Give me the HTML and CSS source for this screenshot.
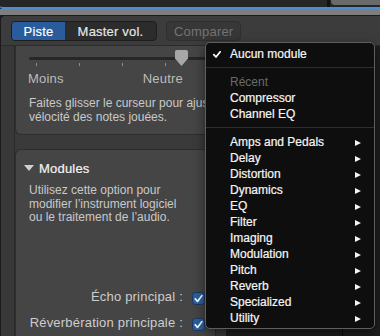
FILE: index.html
```html
<!DOCTYPE html>
<html lang="fr">
<head>
<meta charset="utf-8">
<title>Piste</title>
<link rel="stylesheet" href="styles.css">
</head>
<body>
<div class="titlebar">
  <div class="field"></div>
  <div class="divider"></div>
  <div class="knob"></div>
</div>
<div class="band"></div>
<div class="window">
  <div class="toolbar">
    <div class="segmented">
      <div class="seg active">Piste</div>
      <div class="seg master">Master vol.</div>
    </div>
    <div class="button">Comparer</div>
  </div>
  <div class="body">
    <div class="gutter"></div>
    <div class="inspector">
      <div class="panel first">
        <div class="slider">
          <div class="track"></div>
          <div class="ticks"><i></i><i></i><i></i><i></i><i></i></div>
          <svg class="thumb" width="13" height="16" viewBox="0 0 13 16"><path d="M0 2Q0 0 2 0H11Q13 0 13 2V8.5L6.5 16L0 8.5Z" fill="#a7a7a7"/></svg>
        </div>
        <div class="scale"><span>Moins</span><span>Neutre</span></div>
        <div class="desc">Faites glisser le curseur pour ajuster la<br>vélocité des notes jouées.</div>
      </div>
      <div class="panel second">
        <div class="section-head"><span class="disclosure"></span><span>Modules</span></div>
        <div class="desc desc2">Utilisez cette option pour<br>modifier l’instrument logiciel<br>ou le traitement de l’audio.</div>
        <div class="options">
          <span class="opt-label">Écho principal :</span>
          <svg class="check" width="13" height="13" viewBox="0 0 13 13"><rect x="0.5" y="0.5" width="12" height="12" rx="3" fill="#2c5f9f" stroke="#1a375e"/><path d="M3.2 6.8L5.5 9.4L10 3.6" fill="none" stroke="#fff" stroke-width="1.6" stroke-linecap="round" stroke-linejoin="round"/></svg>
          <span class="opt-label">Réverbération principale :</span>
          <svg class="check" width="13" height="13" viewBox="0 0 13 13"><rect x="0.5" y="0.5" width="12" height="12" rx="3" fill="#2c5f9f" stroke="#1a375e"/><path d="M3.2 6.8L5.5 9.4L10 3.6" fill="none" stroke="#fff" stroke-width="1.6" stroke-linecap="round" stroke-linejoin="round"/></svg>
        </div>
      </div>
    </div>
    <div class="darkpane"><div class="vline"></div></div>
  </div>
</div>

<div class="menu">
  <div class="item"><span class="mark"><svg width="8" height="7" viewBox="0 0 8 7"><path d="M0.8 3.6L3 6L7.2 0.8" fill="none" stroke="#fff" stroke-width="1.7" stroke-linecap="round" stroke-linejoin="round"/></svg></span>Aucun module</div>
  <div class="sep"></div>
  <div class="item disabled"><span class="mark"></span>Récent</div>
  <div class="item"><span class="mark"></span>Compressor</div>
  <div class="item"><span class="mark"></span>Channel EQ</div>
  <div class="sep"></div>
  <div class="item"><span class="mark"></span>Amps and Pedals<span class="arrow"></span></div>
  <div class="item"><span class="mark"></span>Delay<span class="arrow"></span></div>
  <div class="item"><span class="mark"></span>Distortion<span class="arrow"></span></div>
  <div class="item"><span class="mark"></span>Dynamics<span class="arrow"></span></div>
  <div class="item"><span class="mark"></span>EQ<span class="arrow"></span></div>
  <div class="item"><span class="mark"></span>Filter<span class="arrow"></span></div>
  <div class="item"><span class="mark"></span>Imaging<span class="arrow"></span></div>
  <div class="item"><span class="mark"></span>Modulation<span class="arrow"></span></div>
  <div class="item"><span class="mark"></span>Pitch<span class="arrow"></span></div>
  <div class="item"><span class="mark"></span>Reverb<span class="arrow"></span></div>
  <div class="item"><span class="mark"></span>Specialized<span class="arrow"></span></div>
  <div class="item"><span class="mark"></span>Utility<span class="arrow"></span></div>
</div>
</body>
</html>
```

FILE: styles.css
```css
* { box-sizing: border-box; }

body {
  margin: 0;
  width: 380px;
  height: 336px;
  overflow: hidden;
  position: relative;
  background: #1e1e1e;
  font-family: "Liberation Sans", Arial, sans-serif;
}

.titlebar {
  display: flex;
  height: 9px;
  background: #262626;
  border-bottom: 2px solid #4a8ed8;
  border-bottom-left-radius: 3px;
}
.titlebar .field { flex: 1; }
.titlebar .divider { width: 3px; background: #121212; }
.titlebar .knob {
  width: 49px;
  height: 5px;
  margin-left: 1px;
  background: #6a6a6a;
  border-bottom-left-radius: 4px;
}

.band { height: 6px; background: #7e7e7e; }

.window {
  height: 321px;
  border-top: 1px solid #1b1b1b;
  border-left: 1px solid #1b1b1b;
  border-top-left-radius: 5px;
  background: #3c3c3c;
  display: flex;
  flex-direction: column;
  overflow: hidden;
}

.toolbar {
  height: 30px;
  flex: none;
  border-bottom: 1px solid #2b2b2b;
  display: flex;
  align-items: flex-start;
  gap: 9px;
  padding: 5px 0 0 10px;
}

.segmented {
  display: flex;
  height: 20px;
  border: 1px solid #1e1e1e;
  border-radius: 4px;
  background: #2c2c2c;
  overflow: hidden;
}
.seg {
  display: flex;
  align-items: center;
  justify-content: center;
  font-size: 13px;
  letter-spacing: 0.2px;
  color: #e8e8e8;
  -webkit-text-stroke: 0.15px currentColor;
}
.seg.active { width: 53px; background: #2a5c9d; color: #fff; }
.seg.master { width: 91px; }

.button {
  height: 20px;
  display: flex;
  align-items: center;
  padding: 0 7px;
  border: 1px solid #2f2f2f;
  border-radius: 4px;
  background: #373737;
  color: #747474;
  font-size: 13px;
  letter-spacing: 0.2px;
}

.body { flex: 1; display: flex; min-height: 0; }

.gutter {
  width: 14px;
  flex: none;
  background: #383838;
  border-right: 1px solid #2a2a2a;
}

.inspector {
  width: 211px;
  flex: none;
  display: flex;
  flex-direction: column;
  background: #3a3a3a;
}

.panel {
  background: #454545;
  border: 1px solid #2d2d2d;
  margin-right: 10px;
}
.panel.first {
  border-top: none;
  border-radius: 0 0 6px 6px;
  padding: 4px 0 10px 13px;
}
.panel.second {
  flex: 1;
  margin-top: 14px;
  border-bottom: none;
  border-radius: 6px 6px 0 0;
  padding-top: 10px;
}

.slider { position: relative; height: 16px; padding-top: 7px; }
.track { width: 220px; height: 3px; border-radius: 2px; background: #272727; }
.ticks { display: flex; gap: 42px; margin-top: 3px; padding-left: 7px; }
.ticks i { width: 1px; height: 3px; background: #8c8c8c; }
.thumb { position: absolute; left: 146px; top: 0; }

.scale {
  display: flex;
  justify-content: space-between;
  width: 155px;
  margin: 5px 0 0 -1px;
  font-size: 13px;
  line-height: 16px;
  letter-spacing: 0.2px;
  color: #bcbcbc;
}

.desc {
  margin-top: 10px;
  font-size: 12px;
  line-height: 13.5px;
  color: #c9c9c9;
  white-space: nowrap;
}

.section-head {
  display: flex;
  align-items: center;
  gap: 5px;
  height: 16px;
  padding-left: 8px;
  font-size: 13px;
  letter-spacing: 0.2px;
  color: #f4f4f4;
  -webkit-text-stroke: 0.2px currentColor;
}
.disclosure {
  width: 0;
  height: 0;
  border-top: 6px solid #d0d0d0;
  border-left: 5px solid transparent;
  border-right: 5px solid transparent;
}

.desc2 { margin-top: 8px; padding-left: 13px; }

.options {
  display: grid;
  grid-template-columns: 155px 13px;
  column-gap: 9px;
  row-gap: 10px;
  margin-top: 64.5px;
  padding-left: 12px;
  font-size: 13px;
  line-height: 16px;
  letter-spacing: 0.2px;
  color: #cdcdcd;
}
.opt-label { text-align: right; white-space: nowrap; }
.check { margin-top: 3px; display: block; }

.darkpane { flex: 1; background: #1e1e1e; }
.vline { width: 1px; height: 100%; margin-left: 116px; background: #0b0b0b; }

.menu {
  position: absolute;
  left: 205px;
  top: 42px;
  width: 170px;
  height: 287px;
  padding: 3px 0 2px;
  border: 1px solid #5e5e5e;
  border-radius: 5px;
  background: #0e0e0e;
  box-shadow: 0 4px 12px rgba(0, 0, 0, 0.5);
  font-size: 12px;
  color: #f6f6f6;
}
.item {
  display: flex;
  align-items: center;
  height: 16px;
  line-height: 16px;
  padding: 0 13px 0 7px;
  white-space: nowrap;
  -webkit-text-stroke: 0.2px currentColor;
}
.item.disabled { color: #6b6b6b; -webkit-text-stroke: 0; }
.mark { width: 17px; flex: none; display: flex; align-items: center; }
.mark svg { display: block; }
.arrow {
  margin-left: auto;
  margin-top: 1px;
  width: 0;
  height: 0;
  border-left: 6px solid #f4f4f4;
  border-top: 3.5px solid transparent;
  border-bottom: 3.5px solid transparent;
}
.sep { height: 1px; margin: 5px 0 6px; background: #2e2e2e; }
```
